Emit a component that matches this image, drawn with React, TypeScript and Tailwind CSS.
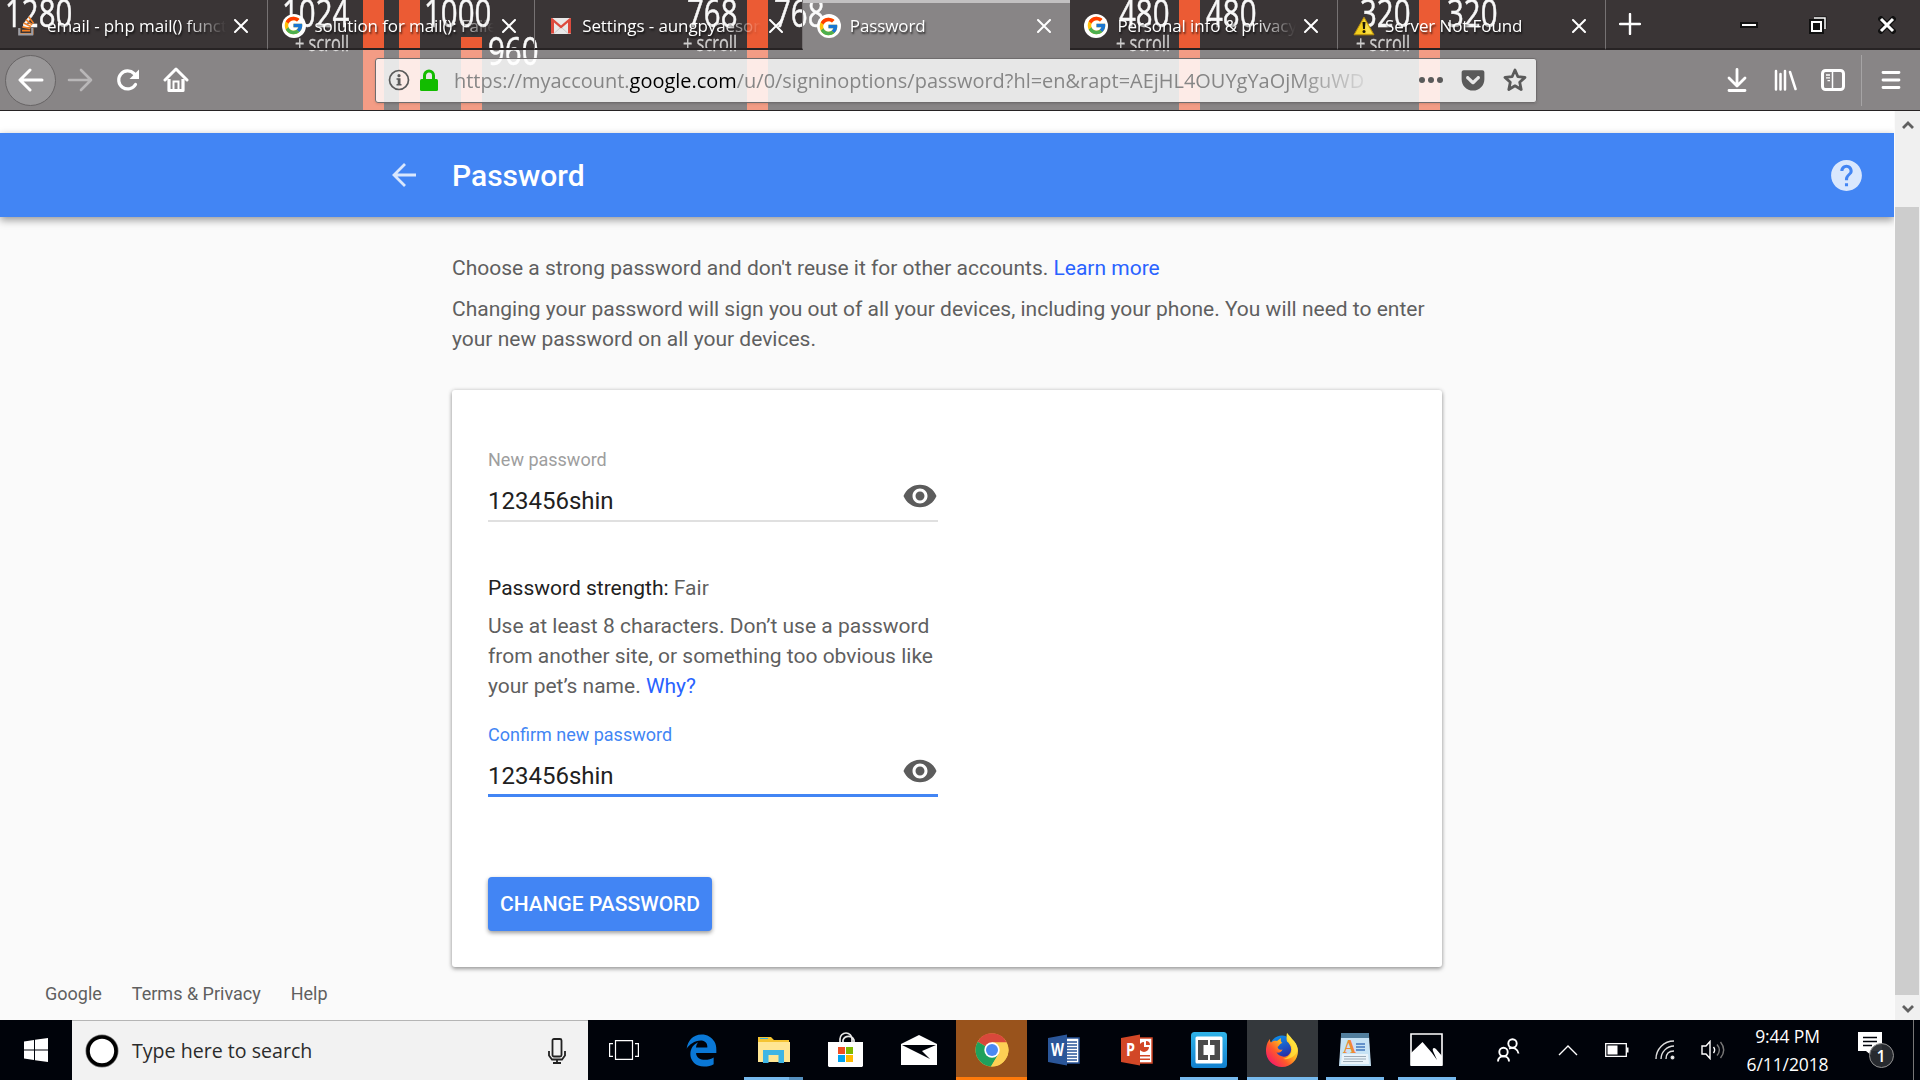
import React from "react";
import { FcGoogle } from "react-icons/fc";
import { FaEdgeLegacy, FaStackOverflow, FaGetPocket } from "react-icons/fa6";
import { MdVisibility, MdHelp } from "react-icons/md";

const bars = [
  "left-[363px] top-0 w-[21px]",
  "left-[399px] top-0 w-[21px]",
  "left-[461px] top-[37px] w-[21px]",
  "left-[747px] top-0 w-[21px]",
  "left-[1179px] top-0 w-[21px]",
  "left-[1419px] top-0 w-[21px]",
];

const marks: [string, string][] = [
  ["1280", "left-[5px] top-[-14px]"],
  ["1024", "left-[282px] top-[-14px]"],
  ["1000", "left-[424px] top-[-14px]"],
  ["960", "left-[488px] top-[24px]"],
  ["768", "left-[687px] top-[-14px]"],
  ["768", "left-[774px] top-[-14px]"],
  ["480", "left-[1119px] top-[-14px]"],
  ["480", "left-[1206px] top-[-14px]"],
  ["320", "left-[1360px] top-[-14px]"],
  ["320", "left-[1447px] top-[-14px]"],
];

const scrolls = ["left-[295px]", "left-[683px]", "left-[1116px]", "left-[1356px]"];

function ThemeBackdrop() {
  return (
    <div className="absolute inset-0 overflow-hidden bg-[#3a3536]">
      {bars.map((b) => (
        <div key={b} className={`absolute bottom-0 bg-[#eb5b34] ${b}`} />
      ))}
      {marks.map(([t, c]) => (
        <span key={c} className={`absolute origin-left scale-x-[.755] text-[39px] leading-[52px] text-[#f8f8f8] [-webkit-text-stroke:.5px_#f8f8f8] ${c}`}>{t}</span>
      ))}
      {scrolls.map((c) => (
        <span key={c} className={`absolute top-[29px] origin-left scale-x-[.78] whitespace-nowrap text-[21px] leading-[28px] text-[#cfcdcd] [-webkit-text-stroke:.3px_#cfcdcd] ${c}`}>+ scroll</span>
      ))}
    </div>
  );
}

function GoogleMark() {
  return (
    <span className="flex size-6 items-center justify-center rounded-full bg-white">
      <FcGoogle size={21} />
    </span>
  );
}

function GmailMark() {
  return (
    <svg width="20" height="16" viewBox="0 0 20 16">
      <rect width="20" height="16" rx="1" fill="#e9e9e9" />
      <path d="M3 15.5 10 9l7 6.500" fill="none" stroke="#c9c9c9" />
      <path d="M0 1v14.500h3V4.500l7 6 7-6v11h3V1a1 1 0 0 0-1.500-.8L10 7.500 1.500.2A1 1 0 0 0 0 1z" fill="#dd4b3e" />
    </svg>
  );
}

function StackMark() {
  return (
    <span className="relative flex">
      <FaStackOverflow size={21} color="#f48024" />
      <svg width="21" height="21" viewBox="0 0 21 21" className="absolute inset-0">
        <path d="M3.200 13v6.600h13V13" fill="none" stroke="#9b9fa8" strokeWidth="2" />
      </svg>
    </span>
  );
}

function WarningMark() {
  return (
    <svg width="22" height="20" viewBox="0 0 22 20">
      <path d="M11 1.200 21 18.800H1z" fill="#f3cf1c" stroke="#b98d10" strokeLinejoin="round" />
      <path d="M11 3 19 17.600h-6z" fill="#fbe96a" opacity=".6" />
      <path d="M9.500 6h3l-.6 7h-1.800z" fill="#1d1808" />
      <circle cx="11" cy="15.500" r="1.500" fill="#1d1808" />
    </svg>
  );
}

const tabs = [
  { title: "email - php mail() function", icon: <StackMark /> },
  { title: "solution for mail(): Failed to", icon: <GoogleMark /> },
  { title: "Settings - aungpyaesone", icon: <GmailMark /> },
  { title: "Password", icon: <GoogleMark />, active: true },
  { title: "Personal info & privacy", icon: <GoogleMark /> },
  { title: "Server Not Found", icon: <WarningMark /> },
];

function TabStrip() {
  return (
    <div className="relative flex h-[50px] text-white">
      {tabs.map((t) => (
        <div
          key={t.title}
          className={
            t.active
              ? "flex h-[50px] w-[267.600px] shrink-0 items-center border-t-[3px] border-[#c2c0c1] bg-white/40 pb-[1px] pl-[14px]"
              : "flex h-[50px] w-[267.600px] shrink-0 items-center border-r border-b-2 border-r-[#767273] border-b-[#272324] pt-[3px] pl-[14px]"
          }
        >
          <span className="flex w-6 justify-center">{t.icon}</span>
          <span className="ml-[9px] w-[180px] overflow-hidden whitespace-nowrap text-[17px] leading-[26px] tracking-[-.1px] [mask-image:linear-gradient(to_right,black_138px,transparent_179px)] [text-shadow:1px_2px_2px_rgba(0,0,0,.7)]">
            {t.title}
          </span>
          <svg width="14" height="14" viewBox="0 0 14 14" className="ml-[7px]">
            <path d="M1 1l12 12M13 1 1 13" stroke="#fff" strokeWidth="2" strokeLinecap="round" />
          </svg>
        </div>
      ))}
      <div className="flex flex-1 items-center border-b-2 border-[#272324]">
        <svg width="22" height="22" viewBox="0 0 22 22" className="ml-[13px]">
          <path d="M11 1v20M1 11h20" stroke="#fff" strokeWidth="2.400" strokeLinecap="round" />
        </svg>
        <svg width="18" height="6" viewBox="0 0 18 6" className="mt-[2px] ml-[99px]">
          <path d="M0 0h18v6H0z" fill="#111" />
          <path d="M2 2h14v2H2z" fill="#fff" />
        </svg>
        <svg width="18" height="18" viewBox="0 0 18 18" className="mt-[2px] ml-[51px]">
          <path d="M5.500 2.500h10v10" fill="none" stroke="#111" strokeWidth="4" />
          <path d="M5 2h11v11" fill="none" stroke="#fff" strokeWidth="1.500" />
          <path d="M0 3h15v15H0z" fill="#111" />
          <path d="M3 6h9v9H3z" fill="none" stroke="#fff" strokeWidth="2" />
        </svg>
        <svg width="18" height="18" viewBox="0 0 18 18" className="mt-[2px] ml-[51px]">
          <path d="M3 3l12 12M15 3 3 15" stroke="#111" strokeWidth="5.500" strokeLinecap="square" />
          <path d="M3 3l12 12M15 3 3 15" stroke="#fff" strokeWidth="3" />
        </svg>
      </div>
    </div>
  );
}

function NavBar() {
  return (
    <div className="relative flex h-[61px] items-center border-b border-[#272324] bg-white/40">
      <div className="ml-[5px] flex size-[51px] items-center justify-center rounded-full border border-[#676465] bg-white/15">
        <svg width="26" height="24" viewBox="0 0 26 24">
          <path d="M12 2 2 12l10 10M2.500 12H24" fill="none" stroke="#fff" strokeWidth="3" strokeLinecap="round" strokeLinejoin="round" />
        </svg>
      </div>
      <svg width="26" height="24" viewBox="0 0 26 24" className="ml-[11px]">
        <path d="M14 2l10 10-10 10M23.500 12H2" fill="none" stroke="#b9b7b8" strokeWidth="2.600" strokeLinecap="round" strokeLinejoin="round" />
      </svg>
      <svg width="24" height="24" viewBox="0 0 24 24" className="ml-[23px]">
        <path d="M19.500 16.500A9 9 0 1 1 18 5.500l2 2" fill="none" stroke="#fff" strokeWidth="3.200" strokeLinecap="round" />
        <path d="M23 1.500V11h-9.500z" fill="#fff" />
      </svg>
      <svg width="26" height="26" viewBox="0 0 26 26" className="ml-[23px]">
        <path d="M2 13 13 2l11 11" fill="none" stroke="#fff" strokeWidth="3" strokeLinecap="round" strokeLinejoin="round" />
        <path d="M6 12v11.500h14V12" fill="none" stroke="#fff" strokeWidth="3.200" strokeLinejoin="round" />
        <path d="M10.500 23v-8.500h5V23" fill="none" stroke="#fff" strokeWidth="2" />
      </svg>
      <div className="ml-[186px] flex h-[45px] w-[1162px] items-center rounded-[3px] border border-[#6f6c6d] bg-white/80 shadow-sm">
        <svg width="22" height="22" viewBox="0 0 22 22" className="ml-[12px]">
          <circle cx="11" cy="11" r="9.500" fill="none" stroke="#5a5a5a" strokeWidth="1.700" />
          <circle cx="11" cy="6.700" r="1.600" fill="#5a5a5a" />
          <path d="M8.500 9.300h4V15h1v1.500h-5V15h1.200v-4.200H8.500z" fill="#5a5a5a" />
        </svg>
        <svg width="18" height="22" viewBox="0 0 18 22" className="ml-[10px]">
          <path d="M4.500 11V6.500a4.500 4.500 0 0 1 9 0V11" fill="none" stroke="#12bc00" strokeWidth="3" />
          <rect y="10" width="18" height="12" rx="1.500" fill="#12bc00" />
        </svg>
        <span className="mt-[2px] ml-[16px] w-[914px] overflow-hidden whitespace-nowrap text-[19.970px] leading-[32px] text-[#868686] [mask-image:linear-gradient(to_right,black_840px,transparent_925px)]">
          https://myaccount.<span className="text-black">google.com</span>/u/0/signinoptions/password?hl=en&amp;rapt=AEjHL4OUYgYaOjMguWD
        </span>
        <svg width="24" height="6" viewBox="0 0 24 6" className="ml-[51px]" fill="#5a5a5a">
          <circle cx="3" cy="3" r="3" /><circle cx="12" cy="3" r="3" /><circle cx="21" cy="3" r="3" />
        </svg>
        <FaGetPocket size={26} color="#5a5a5a" className="ml-[17px]" />
        <svg width="24" height="24" viewBox="0 0 24 24" className="ml-[17px]">
          <path d="M12 2l2.900 6.700 7.100.7-5.300 4.800 1.500 7.300L12 17.800l-6.200 3.700 1.500-7.300L2 9.400l7.100-.7z" fill="none" stroke="#5a5a5a" strokeWidth="2.800" strokeLinejoin="round" />
        </svg>
      </div>
      <svg width="20" height="24" viewBox="0 0 20 24" className="ml-[190px]">
        <path d="M10 1.500v16M2 10l8 8 8-8M2 22.500h16" fill="none" stroke="#fff" strokeWidth="2.800" strokeLinecap="round" strokeLinejoin="round" />
      </svg>
      <svg width="24" height="22" viewBox="0 0 24 22" className="ml-[27px]">
        <path d="M2 2v18.500M6.500 5v15.500M11 2v18.500M16 3l5.500 17" stroke="#fff" strokeWidth="2.500" strokeLinecap="round" />
      </svg>
      <svg width="24" height="22" viewBox="0 0 24 22" className="ml-[23px]">
        <rect x="1.500" y="1.500" width="21" height="19" rx="3" fill="none" stroke="#fff" strokeWidth="3" />
        <path d="M11.500 2v18" stroke="#fff" strokeWidth="1.500" />
        <path d="M5 6h4M5 8.800h4M6.500 11.600H9" stroke="#fff" strokeWidth="1.300" />
      </svg>
      <div className="ml-[16px] h-[51px] w-px bg-[#a6a4a5]" />
      <svg width="20" height="20" viewBox="0 0 20 20" className="ml-[19px]">
        <path d="M2 2.500h16M2 10h16M2 17.500h16" stroke="#fff" strokeWidth="2.800" strokeLinecap="round" />
      </svg>
    </div>
  );
}

function Field({ label, focused }: { label: string; focused?: boolean }) {
  return (
    <div className="flex h-[76px] w-[450px] flex-col">
      <span className={`text-[18px] leading-6 ${focused ? "text-[#4285f4]" : "text-[#9e9e9e]"}`}>{label}</span>
      <div className={`flex h-[50px] items-center justify-between ${focused ? "border-b-[3px] border-[#4285f4]" : "border-b-2 border-[#e0e0e0]"}`}>
        <span className={`text-[24px] leading-8 text-[#212121] ${focused ? "mt-[10px]" : "mt-[9px]"}`}>123456shin</span>
        <MdVisibility size={36} color="#5c5c5c" />
      </div>
    </div>
  );
}

function Page() {
  return (
    <div className="flex h-[909px] font-['Roboto',sans-serif]">
      <main className="flex w-[1894px] flex-col bg-[#fafafa] text-[21px] leading-[30px] text-[#5f5f5f]">
        <div className="h-[22px] bg-white" />
        <header className="flex h-[84px] items-center bg-[#4285f4] pl-[392px] shadow-[0_3px_8px_rgba(0,0,0,.4)]">
          <svg width="24" height="24" viewBox="0 0 24 24">
            <path d="M13 1 2 12l11 11M2 12h22" fill="none" stroke="#d9e7fd" strokeWidth="2.800" />
          </svg>
          <h1 className="mt-[1px] ml-[36px] text-[30px] leading-9 font-medium text-white">Password</h1>
          <MdHelp size={37} color="#d9e7fd" className="ml-auto mr-[29px]" />
        </header>
        <section className="ml-[452px] w-[990px] pt-[36px]">
          <p>Choose a strong password and don't reuse it for other accounts. <span className="text-[#2962ff]">Learn more</span></p>
          <p className="mt-[11px]">Changing your password will sign you out of all your devices, including your phone. You will need to enter your new password on all your devices.</p>
          <div className="mt-[36px] flex h-[577px] flex-col items-start rounded-[3px] bg-white pl-[36px] pt-[58px] shadow-[0_2px_4px_rgba(0,0,0,.35),0_0_4px_rgba(0,0,0,.14)]">
            <Field label="New password" />
            <p className="mt-[49px] text-[#5f5f5f]"><span className="text-[#212121]">Password strength:</span> Fair</p>
            <p className="mt-[8px] w-[452px]">Use at least 8 characters. Don’t use a password from another site, or something too obvious like your pet’s name. <span className="text-[#2962ff]">Why?</span></p>
            <div className="mt-[22px]"><Field label="Confirm new password" focused /></div>
            <button className="mt-[78px] flex h-[54px] w-[224px] items-center justify-center rounded-[4px] bg-[#4285f4] font-medium whitespace-nowrap text-white shadow-[0_2px_4px_rgba(0,0,0,.4)]">CHANGE PASSWORD</button>
          </div>
        </section>
        <footer className="mt-[15px] flex gap-[30px] pl-[45px] text-[18px] leading-6">
          <span>Google</span><span>Terms &amp; Privacy</span><span>Help</span>
        </footer>
      </main>
      <div className="flex w-[26px] flex-col items-center border-l border-[#fbfbfb] bg-[#f0f0f0]">
        <div className="flex h-[96px] pt-[9px]">
          <svg width="12" height="10" viewBox="0 0 12 10"><path d="M1 8l5-5 5 5" fill="none" stroke="#606060" strokeWidth="2.800" /></svg>
        </div>
        <div className="mr-[1px] h-[788px] w-6 bg-[#cdcdcd]" />
        <svg width="12" height="10" viewBox="0 0 12 10" className="mt-[9px]"><path d="M1 2l5 5 5-5" fill="none" stroke="#606060" strokeWidth="2.800" /></svg>
      </div>
    </div>
  );
}

const ExplorerIcon = (
  <svg width="34" height="28" viewBox="0 0 34 28">
    <path d="M1 1h13l3 3h15v6H1z" fill="#f5c433" /><path d="M3 2.500h8" stroke="#3ab0e0" />
    <path d="M1 6h32v20H1z" fill="#ffe694" />
    <path d="M6 27V14h21v13h-5.500v-8h-10v8z" fill="#3eb5e5" />
  </svg>
);
const StoreIcon = (
  <svg width="36" height="36" viewBox="0 0 36 36">
    <path d="M12 11V7a6 6 0 0 1 12 0v4M15 11V8a6 6 0 0 1 11 0v3" fill="none" stroke="#e8e8e8" strokeWidth="1.700" />
    <path d="M0 10h35v24l-1 1H1l-1-1z" fill="#fff" />
    <path d="M10 15h7v7h-7z" fill="#f04e23" /><path d="M18 15h7v7h-7z" fill="#7fba00" /><path d="M10 23h7v7h-7z" fill="#00a4ef" /><path d="M18 23h7v7h-7z" fill="#ffb900" />
  </svg>
);
const MailIcon = (
  <svg width="36" height="30" viewBox="0 0 36 30">
    <path d="M0 9 18 0l18 9v21H0z" fill="#fff" /><path d="M1 10h34l-14 6 8 8z" fill="#00030a" />
  </svg>
);
const ChromeIcon = (
  <svg width="34" height="34" viewBox="0 0 34 34">
    <circle cx="17" cy="17" r="16.500" fill="#fdd054" />
    <path d="M17 17 2.700 8.700A16.500 16.500 0 0 1 31.800 9.500H17z" fill="#d9483b" />
    <path d="M17 17 2.700 8.700A16.500 16.500 0 0 0 16 33.500L23.500 21z" fill="#1fa15d" />
    <path d="M17 17V9.500h14.600A16.500 16.500 0 0 1 16 33.500L23.500 21z" fill="#fdd054" />
    <circle cx="17" cy="17" r="7.700" fill="#fff" /><circle cx="17" cy="17" r="6" fill="#4a89f3" />
  </svg>
);
function OfficeIcon({ letter, color }: { letter: string; color: string }) {
  return (
    <svg width="34" height="32" viewBox="0 0 34 32">
      <path d="M16 4h16v25H16z" fill="#fff" stroke={color} strokeWidth="1.500" />
      {letter === "W" ? (
        <path d="M20 8h10M20 11h10M20 14h10M20 17h10M20 20h10M20 23h10M20 26h10" stroke={color} strokeWidth="1.300" />
      ) : (
        <g><path d="M24 8a5 5 0 1 0 5 5h-5z" fill={color} /><path d="M26 7v4h4a4 4 0 0 0-4-4zM20 21h10v1.500H20zM20 24.500h10V26H20z" fill={color} /></g>
      )}
      <path d="M1 4 20 .5v31L1 28z" fill={color} />
      <text x="10.500" y="22" textAnchor="middle" fontSize="17" fontWeight="700" fontFamily="Open Sans" fill="#fff" textLength={letter === "W" ? 13 : 9} lengthAdjust="spacingAndGlyphs">{letter}</text>
    </svg>
  );
}
const BracketsIcon = (
  <svg width="36" height="36" viewBox="0 0 36 36">
    <defs><linearGradient id="bk" x2="0" y2="1"><stop stopColor="#30b3e8" /><stop offset="1" stopColor="#1180cf" /></linearGradient></defs>
    <rect width="36" height="36" rx="3.500" fill="url(#bk)" /><rect x="4.500" y="4.500" width="27" height="27" rx="1.500" fill="#fff" />
    <path d="M7 8h10v5h-4.500v10H17v5H7zM29 8H19v5h4.500v10H19v5h10z" fill="#4b4b4b" />
  </svg>
);
const FirefoxIcon = (
  <svg width="34" height="36" viewBox="0 0 34 36">
    <defs>
      <linearGradient id="fx" x1=".9" y1=".1" x2=".1" y2=".9"><stop stopColor="#fff14f" /><stop offset=".4" stopColor="#ffb01f" /><stop offset=".65" stopColor="#ff5a2a" /><stop offset="1" stopColor="#f5156c" /></linearGradient>
      <linearGradient id="fb" x2=".4" y2="1"><stop stopColor="#0a9bf5" /><stop offset="1" stopColor="#2a2aa5" /></linearGradient>
    </defs>
    <circle cx="17" cy="15.500" r="12" fill="url(#fb)" />
    <path d="M22 1c4 4 5 6 7 8 3 4 4 7 4 10a16 16 0 0 1-32 0c0-6 2-10 4-12-.2 2 .3 3 1 3.500 2-2 4-2 6-1.500L16 6c-.5 3 0 4 1.500 5-3 .5-3 3-5 4 1 3 2.500 3 5 2.500-1 3-4 3.500-6 3 3 5 11 6 14 0 2-5-1-9-3.500-11-1-3 0-6 0-8.500z" fill="url(#fx)" />
    <path d="M22 1c-2 6 5 9 5 16 0 5-4 9-9 10 8 1 14-4 14.500-10C32 9 24 6 22 1z" fill="#ffe43c" opacity=".75" />
  </svg>
);
const WordpadIcon = (
  <svg width="32" height="34" viewBox="0 0 32 34">
    <path d="M2 3h28l2 30H0z" fill="#c7e3f5" /><path d="M2 0h28v5H2z" fill="#517e9d" />
    <path d="M3 21h26l1 10H2z" fill="#e9f3fa" />
    <text x="4" y="20" fontSize="18" fontWeight="700" fontFamily="Liberation Serif" fill="#ef8b36">A</text>
    <path d="M17 11h9M17 14h9M17 17h9" stroke="#4478bd" strokeWidth="1.400" />
    <path d="M5 23.500h22M5 26h22M4 28.500h20" stroke="#9cabb8" strokeWidth="1.200" />
  </svg>
);
const PhotosIcon = (
  <svg width="34" height="34" viewBox="0 0 34 34">
    <path d="M1 1h31v31H1z" fill="none" stroke="#fff" strokeWidth="1.600" />
    <path d="M1 20 12.500 9 22 20l5 7-4-9c-1-3 1-4 3-2l6 7v10H1z" fill="#fff" />
  </svg>
);

const apps: { icon: React.ReactNode; cell?: string; line?: string }[] = [
  { icon: <FaEdgeLegacy size={33} color="#0a78d6" /> },
  { icon: ExplorerIcon, line: "w-[59px] bg-[linear-gradient(to_right,#76b9ed_45px,#5590bf_45px)]" },
  { icon: StoreIcon },
  { icon: MailIcon },
  { icon: ChromeIcon, cell: "bg-[#99531c]", line: "w-full bg-[#ff7a0a]" },
  { icon: <OfficeIcon letter="W" color="#2a5699" /> },
  { icon: <OfficeIcon letter="P" color="#d24726" /> },
  { icon: BracketsIcon, line: "w-[58px] bg-[#76b9ed]" },
  { icon: FirefoxIcon, cell: "bg-[#34383c]", line: "w-full bg-[#76b9ed]" },
  { icon: WordpadIcon, line: "w-[58px] bg-[#76b9ed]" },
  { icon: PhotosIcon, line: "w-[58px] bg-[#76b9ed]" },
];

function Taskbar() {
  return (
    <div className="flex h-[60px] bg-[#00030a] text-white">
      <div className="flex w-[72px] items-center justify-center">
        <svg width="24" height="24" viewBox="0 0 24 24" fill="#fff"><path d="M0 3.400 10 2v9.500H0zM11 1.800 24 0v11.500H11zM0 12.500h10V22L0 20.600zM11 12.500h13V24l-13-1.800z" /></svg>
      </div>
      <div className="flex w-[516px] items-center border-t border-[#b5b5b5] bg-[#f2f2f2] pl-[13px]">
        <svg width="34" height="34" viewBox="0 0 34 34">
          <circle cx="17" cy="17" r="15.500" fill="none" stroke="#777" strokeWidth="2" /><circle cx="17" cy="17" r="14" fill="#fff" stroke="#000" strokeWidth="3.600" />
        </svg>
        <span className="ml-[13px] text-[19.600px] leading-7 text-[#2b2b2b]">Type here to search</span>
        <svg width="18" height="26" viewBox="0 0 18 26" className="mr-[22px] ml-auto" fill="none" stroke="#222" strokeWidth="1.800">
          <rect x="4.500" y="1" width="9" height="17.500" rx="1.500" /><path d="M1 13v4.500l3 4h10l3-4V13M9 21.500V25M5 25h8" />
        </svg>
      </div>
      <div className="flex w-[77px] items-center pl-[21px]">
        <svg width="30" height="20" viewBox="0 0 30 20" fill="none" stroke="#fff" strokeWidth="1.200"><path d="M6.500.6h17v18.800h-17zM4 3.600H.6v12.800H4M26 3.600h3.400v12.800H26" /></svg>
      </div>
      {apps.map((a, i) => (
        <div key={i} className="flex w-[72.600px] shrink-0 justify-center">
          <div className={`flex w-[71px] flex-col items-center ${a.cell ?? ""}`}>
            <div className="flex h-[57px] items-center pt-[3px]">{a.icon}</div>
            <div className={`h-[3px] ${a.line ?? ""}`} />
          </div>
        </div>
      ))}
      <div className="flex flex-1 items-center pl-[33px]">
        <svg width="23" height="24" viewBox="0 0 23 24" fill="none" stroke="#fff" strokeWidth="1.900">
          <circle cx="15.500" cy="5.500" r="4.200" /><circle cx="6.500" cy="14" r="4.200" /><path d="M1 23.500c0-7 11-7 11 0M12 10.500c5-2 9 1 9.500 5" />
        </svg>
        <svg width="20" height="12" viewBox="0 0 20 12" className="ml-[38px]" fill="none" stroke="#fff" strokeWidth="1.400"><path d="m1 11 9-9 9 9" /></svg>
        <svg width="24" height="14" viewBox="0 0 24 14" className="ml-[27px]"><path d="M.7.700h20.600v12.600H.7z" fill="none" stroke="#fff" strokeWidth="1.300" /><path d="M2.500 2.500h10v9h-10zM22 4.500h1.500v5H22z" fill="#fff" /></svg>
        <svg width="20" height="20" viewBox="0 0 20 20" className="ml-[26px]" fill="none" stroke="#ddd" strokeWidth="1.400">
          <path d="M1 19C1 9 9 1 19 1M6 19C6 12 12 6 19 6M11 19c0-5 3-8 8-8" /><circle cx="17.500" cy="17.500" r="1.300" fill="#fff" />
        </svg>
        <svg width="24" height="20" viewBox="0 0 24 20" className="ml-[26px]" fill="none" stroke="#fff" strokeWidth="1.400">
          <path d="M1 6h4l4-4.500v17L5 14H1z" /><path d="M12.500 7c1.500 2 1.500 4 0 6" /><path d="M16 4.500c3 3.500 3 7.500 0 11M19.500 2c4 5 4 11 0 16" stroke="#777" />
        </svg>
        <div className="ml-[16px] w-[94px] text-center text-[17.500px] leading-[28px] tracking-[-.1px] whitespace-nowrap">
          <div>9:44 PM</div><div>6/11/2018</div>
        </div>
        <div className="relative ml-[23px] h-[36px] w-[36px]">
          <svg width="24" height="24" viewBox="0 0 24 24"><path d="M0 0h24v19H13.500v4.500L8 19H0z" fill="#fff" /><path d="M5 5.500h14M5 9.500h14M5 13.500h9" stroke="#00030a" strokeWidth="1.300" /></svg>
          <span className="absolute top-[11px] left-[11px] flex size-[25px] items-center justify-center rounded-full border border-[#929292] bg-[#292c31]/95 text-[16px] font-semibold">1</span>
        </div>
        <div className="ml-auto mr-[6px] h-full w-px bg-[#777]" />
      </div>
    </div>
  );
}

export default function App() {
  return (
    <div className="h-[1080px] w-[1920px] overflow-hidden font-['Open_Sans','Noto_Sans',sans-serif]">
      <div className="relative h-[111px]">
        <ThemeBackdrop />
        <TabStrip />
        <NavBar />
      </div>
      <Page />
      <Taskbar />
    </div>
  );
}
